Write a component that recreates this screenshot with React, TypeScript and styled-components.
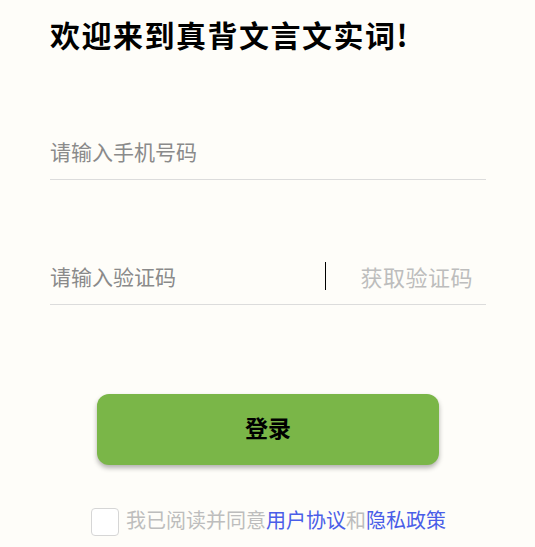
import styled, { createGlobalStyle } from "styled-components";

const GlobalStyle = createGlobalStyle`
    html, body {
        margin: 0;
        padding: 0;
        background: #fefdf9;
    }
    body {
        font-family: "Noto Sans CJK SC", "Noto Sans", sans-serif;
    }
`

export default function App() {
    return (
        <Page>
            <GlobalStyle />
            <Title>欢迎来到真背文言文实词!</Title>
            <Field>
                <Input placeholder="请输入手机号码" />
            </Field>
            <Field>
                <Input placeholder="请输入验证码" />
                <Divider />
                <CodeButton>获取验证码</CodeButton>
            </Field>
            <LoginButton>登录</LoginButton>
            <Agreement>
                <Check />
                <span>我已阅读并同意</span>
                <Link>用户协议</Link>
                <span>和</span>
                <Link>隐私政策</Link>
            </Agreement>
        </Page>
    )
}

const Page = styled.div`
    width: 436px;
    padding: 12px 0 0 50px;
    display: flex;
    flex-direction: column;
`
const Title = styled.h1`
    margin: 0;
    font-size: 30px;
    font-weight: 700;
    line-height: 44px;
    color: #000;
    letter-spacing: 1.5px;
`
const Field = styled.div`
    display: flex;
    align-items: center;
    height: 56px;
    margin-top: 67px;
    border-bottom: 1px solid #dcdcdc;
    & + & {
        margin-top: 68px;
    }
`
const Input = styled.input`
    flex: 1;
    min-width: 0;
    border: none;
    outline: none;
    background: transparent;
    padding: 0;
    font-family: inherit;
    font-size: 21px;
    color: #333;
    &::placeholder {
        color: #8a8a8a;
    }
`
const Divider = styled.div`
    width: 1px;
    height: 28px;
    background: #000;
    margin-right: 34px;
`
const CodeButton = styled.span`
    font-size: 22px;
    letter-spacing: 0.5px;
    color: #bdbdbd;
    margin-right: 13px;
`
const LoginButton = styled.button`
    align-self: flex-start;
    margin: 89px 0 0 47px;
    padding: 0 0 4px;
    width: 342px;
    height: 71px;
    border: none;
    border-radius: 12px;
    background: #7ab648;
    box-shadow: 0 3px 5px rgba(0, 0, 0, 0.3);
    font-family: inherit;
    font-size: 23px;
    line-height: 1;
    font-weight: 700;
    color: #000;
`
const Agreement = styled.div`
    display: flex;
    align-items: center;
    margin: 43px 0 0 41px;
    font-size: 20px;
    line-height: 24px;
    color: #bdbdbd;
    span:not(:first-child) {
        margin-top: -4px;
    }
`
const Check = styled.span`
    box-sizing: border-box;
    width: 28px;
    height: 28px;
    border: 1px solid #d6d6d6;
    border-radius: 4px;
    background: #fff;
    margin-right: 7px;
`
const Link = styled.span`
    color: #4a5ee8;
`
